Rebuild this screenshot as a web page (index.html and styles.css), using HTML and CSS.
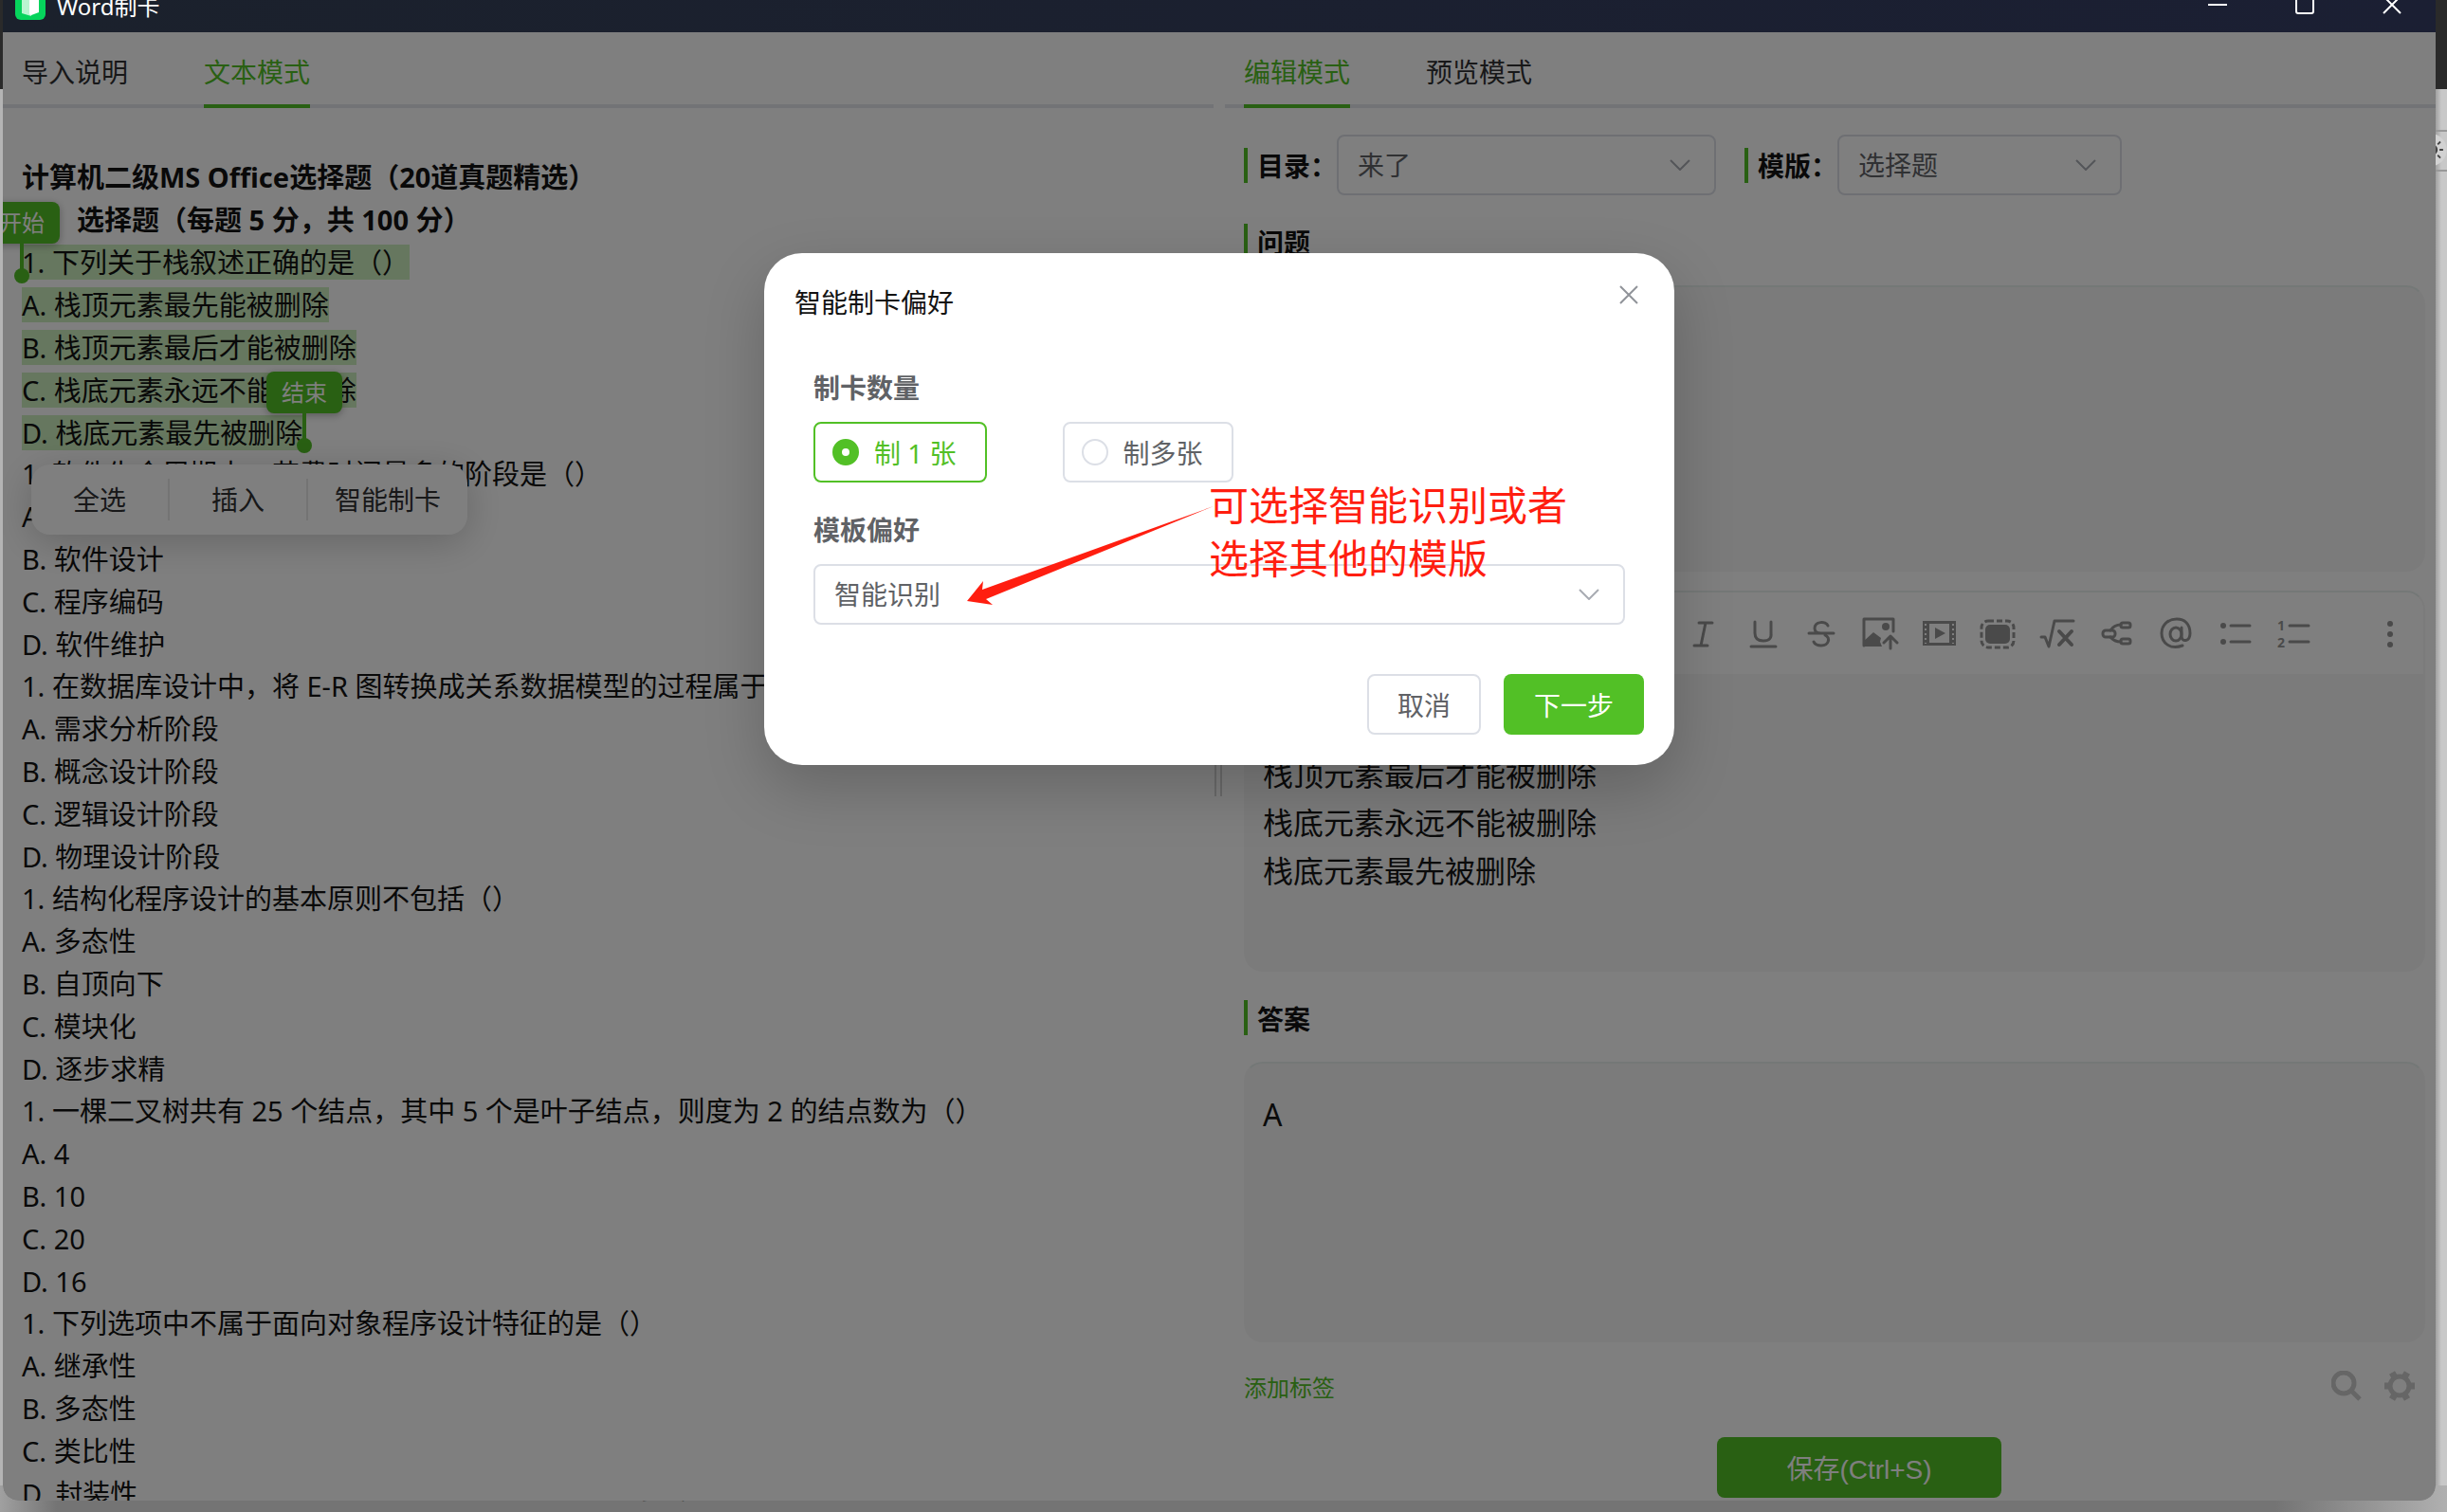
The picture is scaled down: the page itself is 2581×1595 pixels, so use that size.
FILE: index.html
```
<!DOCTYPE html>
<html lang="zh-CN">
<head>
    <meta charset="UTF-8">
    <meta name="viewport" content="width=device-width, initial-scale=1.0">
    <title>Word制卡</title>
    <link rel="stylesheet" href="styles.css">
</head>
<body>
    <div class="app">
        <!-- 标题栏 -->
        <header class="titlebar">
            <svg class="logo" viewBox="0 0 32 32">
                <rect width="32" height="32" rx="6" fill="#06d45c"/>
                <path d="M7 4h10v24l-10-3z" fill="#b9f5d0"/>
                <path d="M15 4h10v20l-8 3-2-1z" fill="#fff"/>
            </svg>
            <h1>Word制卡</h1>
            <div class="win-btns">
                <button aria-label="最小化"><svg viewBox="0 0 20 20"><path d="M0 10h20"/></svg></button>
                <button aria-label="最大化"><svg viewBox="0 0 20 20"><rect x="1" y="1" width="18" height="18" rx="2"/></svg></button>
                <button aria-label="关闭"><svg viewBox="0 0 20 20"><path d="M1 1l18 18M19 1L1 19"/></svg></button>
            </div>
        </header>

        <main class="main">
            <!-- 左侧文本 -->
            <section class="pane left">
                <nav class="tabs">
                    <a href="#">导入说明</a>
                    <a href="#" class="active">文本模式</a>
                </nav>
                <div class="doc">
                    <h2>计算机二级MS Office选择题（20道真题精选）</h2>
                    <h2 class="indent">选择题（每题 5 分，共 100 分）</h2>
                    <div class="question picked">
                        <p>1. 下列关于栈叙述正确的是（）</p>
                        <p>A. 栈顶元素最先能被删除</p>
                        <p>B. 栈顶元素最后才能被删除</p>
                        <p>C. 栈底元素永远不能被删除</p>
                        <p>D. 栈底元素最先被删除</p>
                        <div class="handle start"><span>开始</span></div>
                        <div class="handle end"><span>结束</span></div>
                        <div class="popmenu">
                            <button>全选</button>
                            <button>插入</button>
                            <button>智能制卡</button>
                        </div>
                    </div>
                    <div class="question">
                        <p>1. 软件生命周期中，花费时间最多的阶段是（）</p>
                        <p>A. 需求分析</p>
                        <p>B. 软件设计</p>
                        <p>C. 程序编码</p>
                        <p>D. 软件维护</p>
                    </div>
                    <div class="question">
                        <p>1. 在数据库设计中，将 E-R 图转换成关系数据模型的过程属于（）</p>
                        <p>A. 需求分析阶段</p>
                        <p>B. 概念设计阶段</p>
                        <p>C. 逻辑设计阶段</p>
                        <p>D. 物理设计阶段</p>
                    </div>
                    <div class="question">
                        <p>1. 结构化程序设计的基本原则不包括（）</p>
                        <p>A. 多态性</p>
                        <p>B. 自顶向下</p>
                        <p>C. 模块化</p>
                        <p>D. 逐步求精</p>
                    </div>
                    <div class="question">
                        <p>1. 一棵二叉树共有 25 个结点，其中 5 个是叶子结点，则度为 2 的结点数为（）</p>
                        <p>A. 4</p>
                        <p>B. 10</p>
                        <p>C. 20</p>
                        <p>D. 16</p>
                    </div>
                    <div class="question">
                        <p>1. 下列选项中不属于面向对象程序设计特征的是（）</p>
                        <p>A. 继承性</p>
                        <p>B. 多态性</p>
                        <p>C. 类比性</p>
                        <p>D. 封装性</p>
                    </div>
                </div>
            </section>

            <div class="splitter"></div>

            <!-- 右侧编辑 -->
            <section class="pane right">
                <nav class="tabs">
                    <a href="#" class="active">编辑模式</a>
                    <a href="#">预览模式</a>
                </nav>
                <div class="editor">
                    <div class="form-row">
                        <label class="label" for="catalog">目录：</label>
                        <div class="select catalog">
                            <select id="catalog"><option>来了</option></select>
                            <svg viewBox="0 0 22 12"><path d="M1 1l10 10L21 1"/></svg>
                        </div>
                        <label class="label" for="template">模版：</label>
                        <div class="select template">
                            <select id="template"><option>选择题</option></select>
                            <svg viewBox="0 0 22 12"><path d="M1 1l10 10L21 1"/></svg>
                        </div>
                    </div>

                    <h3 class="label">问题</h3>
                    <div class="card question-card"></div>

                    <div class="card options-card">
                        <div class="toolbar">
                            <button aria-label="斜体"><svg viewBox="0 0 40 40"><path d="M15 9h14M10 33h14M22 9l-5 24"/></svg></button>
                            <button aria-label="下划线"><svg viewBox="0 0 40 40"><path d="M12 8v12q0 8 9 8t8-8V8M8 34h26"/></svg></button>
                            <button aria-label="删除线"><svg viewBox="0 0 40 40"><path d="M27 12c-2-5-14-5-14 3 0 3 3 5 7 5M7 20h26M24 22c6 3 4 11-4 11-4 0-7-2-8-4"/></svg></button>
                            <button aria-label="图片"><svg viewBox="0 0 40 40"><path d="M3 33V5h31v13M31 36V23M24 30l7-7 7 7"/><path class="fill" d="M2 29l11-10 8 6-1 4 2 5H2z"/><circle class="fill" cx="26" cy="13" r="4"/></svg></button>
                            <button aria-label="视频"><svg viewBox="0 0 40 40"><path class="fill" fill-rule="evenodd" d="M3 7h35v26H3zM10 10v20h21V10z"/><path class="fill" d="M16 14l11 6-11 6z"/><path class="holes" d="M6 10v21M35 10v21"/></svg></button>
                            <button aria-label="遮挡"><svg viewBox="0 0 40 40"><rect class="dashed" x="3" y="7" width="34" height="28" rx="7"/><rect class="fill" x="7" y="11" width="26" height="20" rx="5"/></svg></button>
                            <button aria-label="公式"><svg viewBox="0 0 40 40"><path d="M4 24h4l4 10 6-27h20"/><path class="thick" d="M23 18l13 14M36 18L23 32"/></svg></button>
                            <button aria-label="导图"><svg viewBox="0 0 40 40"><rect x="7" y="17" width="13" height="7" rx="3"/><rect x="26" y="9" width="10" height="5" rx="2"/><rect x="26" y="26" width="10" height="5" rx="2"/><path d="M15 17q4-6 11-6M15 24q4 5 11 5"/></svg></button>
                            <button aria-label="提及"><svg viewBox="0 0 40 40"><ellipse cx="22" cy="21" rx="6" ry="7"/><path d="M28 14v9c0 7 9 6 9-3C37 10 31 5 23 5 14 5 7 11 7 20c0 10 9 18 22 13"/></svg></button>
                            <button aria-label="无序列表"><svg viewBox="0 0 40 40"><circle class="fill" cx="10" cy="12" r="3"/><circle class="fill" cx="10" cy="29" r="3"/><path d="M18 12h20M18 29h20"/></svg></button>
                            <button aria-label="有序列表"><svg viewBox="0 0 40 40"><text x="5" y="17">1</text><text x="5" y="35">2</text><path d="M18 12h20M18 29h20"/></svg></button>
                            <button class="more" aria-label="更多"><svg viewBox="0 0 40 40"><circle class="fill" cx="20" cy="10" r="3"/><circle class="fill" cx="20" cy="21" r="3"/><circle class="fill" cx="20" cy="32" r="3"/></svg></button>
                        </div>
                        <div class="options">
                            <p>栈顶元素最后才能被删除</p>
                            <p>栈底元素永远不能被删除</p>
                            <p>栈底元素最先被删除</p>
                        </div>
                    </div>

                    <h3 class="label">答案</h3>
                    <div class="card answer-card"><p>A</p></div>

                    <div class="tag-row">
                        <a href="#">添加标签</a>
                        <button aria-label="搜索"><svg viewBox="0 0 32 32"><circle cx="13" cy="13" r="11"/><path d="M21 21l9 9"/></svg></button>
                        <button aria-label="设置"><svg viewBox="0 0 32 32"><circle cx="16" cy="16" r="10"/><path class="teeth" d="M0 16h5M27 16h5M8 2l3 5M21 25l3 5M24 2l-3 5M11 25l-3 5"/></svg></button>
                    </div>
                    <div class="save-row">
                        <button class="save">保存(Ctrl+S)</button>
                    </div>
                </div>
            </section>

            <!-- 弹窗 -->
            <div class="overlay">
                <div class="modal" role="dialog" aria-labelledby="modalTitle">
                    <div class="modal-header">
                        <h2 id="modalTitle">智能制卡偏好</h2>
                        <button class="close" aria-label="关闭"><svg viewBox="0 0 20 20"><path d="M1 1l18 18M19 1L1 19"/></svg></button>
                    </div>
                    <div class="modal-body">
                        <h4>制卡数量</h4>
                        <div class="radios">
                            <label class="radio"><input type="radio" name="count" checked>制 1 张</label>
                            <label class="radio"><input type="radio" name="count">制多张</label>
                        </div>
                        <h4><label for="prefer">模板偏好</label></h4>
                        <div class="select">
                            <select id="prefer"><option>智能识别</option></select>
                            <svg viewBox="0 0 22 12"><path d="M1 1l10 10L21 1"/></svg>
                        </div>
                    </div>
                    <div class="modal-footer">
                        <button class="cancel">取消</button>
                        <button class="next">下一步</button>
                    </div>
                    <!-- 标注 -->
                    <svg class="arrow" viewBox="0 0 260 104"><path d="M0 100l17-21-1 9L260 0 20 98l7 6z"/></svg>
                    <p class="note">可选择智能识别或者<br>选择其他的模版</p>
                </div>
            </div>
        </main>
    </div>

    <!-- 后面的窗口 -->
    <div class="behind-right">
        <svg viewBox="0 0 12 42"><circle cx="-6" cy="20" r="18" fill="#d2d2d2"/><circle cx="-4" cy="20" r="6" fill="#444"/><path d="M4 20h4M2 14l3-3M2 26l3 3" stroke="#444" stroke-width="2"/></svg>
    </div>
    <div class="behind-bottom">D. 多态性</div>
</body>
</html>
```
FILE: styles.css
```
* {
    box-sizing: border-box;
}

body {
    margin: 0;
    height: 100vh;
    overflow: hidden;
    position: relative;
    padding: 0 12px 12px 3px;
    font-family: "Noto Sans", "Noto Sans CJK SC", sans-serif;
    font-size: 28px;
    color: #303133;
    background: linear-gradient(#2a2a2a 94px, #b4b4b4 94px);
}

h1, h2, h3, h4, p {
    margin: 0;
}

button, select {
    font: inherit;
    color: inherit;
    border: none;
    background: none;
    padding: 0;
}

a {
    color: inherit;
    text-decoration: none;
}

svg {
    fill: none;
    stroke: currentColor;
    stroke-width: 2;
    display: block;
}

/* 窗口顶部超出屏幕 */
.app {
    display: flex;
    flex-direction: column;
    height: calc(100% + 24px);
    margin-top: -24px;
    border-radius: 0 0 16px 16px;
    overflow: hidden;
    background: #fff;
    position: relative;
    z-index: 1;
}

.titlebar {
    display: flex;
    align-items: center;
    height: 58px;
    flex-shrink: 0;
    padding-left: 13px;
    background: linear-gradient(90deg, #1b212c, #1b1f33);
    color: #fff;
}

.titlebar h1 {
    margin-left: 12px;
    font-size: 24px;
    font-weight: normal;
}

.logo {
    width: 32px;
    height: 32px;
    stroke: none;
}

.win-btns {
    display: flex;
    margin-left: auto;
}

.win-btns button {
    width: 92px;
    padding: 0 36px;
}

.main {
    flex: 1;
    min-height: 0;
    display: flex;
    position: relative;
}

.pane {
    flex: 1;
    min-width: 0;
    display: flex;
    flex-direction: column;
    overflow: hidden;
}

.tabs {
    display: flex;
    gap: 80px;
    height: 80px;
    flex-shrink: 0;
    padding: 0 20px;
    border-bottom: 4px solid #e4e7ed;
}

.tabs a {
    height: 80px;
    padding-top: 6px;
    line-height: 72px;
}

.tabs a.active {
    color: #52c026;
    border-bottom: 4px solid #52c026;
}

/* 左侧文本 */
.doc {
    padding: 50px 20px 0;
    font-size: 29px;
    line-height: 45px;
    color: #121212;
    white-space: nowrap;
}

.doc h2 {
    font-size: 29px;
}

.indent {
    padding-left: 58px;
}

.question p:first-child {
    line-height: 44px;
}

.picked {
    display: flow-root;
    position: relative;
}

.picked p,
.picked p:first-child {
    width: fit-content;
    line-height: 37px;
    background: #cceebe;
}

.picked p {
    margin-top: 8px;
}

.picked p:first-child {
    margin-top: 4px;
}

.picked p:last-of-type {
    margin-bottom: 3px;
}

.handle {
    position: absolute;
    width: 80px;
    height: 82px;
}

.handle.start {
    left: -40px;
    top: -41px;
}

.handle.end {
    left: 258px;
    top: 138px;
}

.handle span {
    display: block;
    height: 44px;
    line-height: 44px;
    border-radius: 8px;
    font-size: 24px;
    text-align: center;
    color: #fff;
    background: #52c026;
    box-shadow: 0 2px 8px rgba(0, 0, 0, 0.3);
}

.handle::before {
    content: "";
    position: absolute;
    left: 38px;
    top: 44px;
    width: 4px;
    height: 30px;
    background: #52c026;
}

.handle::after {
    content: "";
    position: absolute;
    left: 32px;
    top: 70px;
    width: 16px;
    height: 16px;
    border-radius: 50%;
    background: #52c026;
}

.popmenu {
    position: absolute;
    left: 10px;
    top: 236px;
    display: flex;
    align-items: center;
    height: 74px;
    border-radius: 20px;
    font-size: 28px;
    background: #fff;
    box-shadow: 0 8px 40px rgba(0, 0, 0, 0.2);
}

.popmenu button {
    height: 44px;
    padding: 0 44px;
    line-height: 44px;
    border-right: 2px solid #e8e8e8;
    color: #303133;
}

.popmenu button:last-child {
    padding: 0 28px;
    border: none;
}

.splitter {
    width: 12px;
    height: 62px;
    align-self: center;
    background: linear-gradient(90deg, transparent 1px, #d4d4d4 1px, #d4d4d4 3px, transparent 3px, transparent 7px, #d4d4d4 7px, #d4d4d4 9px, transparent 9px);
}

/* 右侧编辑 */
.editor {
    padding: 28px 11px 0 20px;
}

.form-row {
    display: flex;
    align-items: center;
    margin-bottom: 30px;
}

.label {
    display: flex;
    align-items: center;
    height: 64px;
    font-size: 28px;
    font-weight: bold;
    color: #121212;
}

.label::before {
    content: "";
    width: 4px;
    height: 37px;
    margin-right: 10px;
    background: #52c026;
}

h3.label {
    height: 37px;
}

.select {
    position: relative;
}

.select select {
    width: 100%;
    height: 64px;
    padding: 0 20px;
    appearance: none;
    border: 2px solid #dcdfe6;
    border-radius: 8px;
    background: #fff;
    color: #606266;
}

.select svg {
    position: absolute;
    right: 27px;
    top: 26px;
    width: 22px;
    height: 12px;
    color: #a8abb2;
}

.catalog {
    width: 400px;
    margin-right: 30px;
}

.template {
    width: 300px;
}

.card {
    margin-top: 28px;
    border: 2px solid #f7f7f7;
    border-top-color: #e8f0ee;
    border-radius: 20px;
    background: #f7f7f7;
    font-size: 32px;
    line-height: 51px;
    color: #161616;
    overflow: hidden;
}

.question-card {
    height: 302px;
}

.options-card {
    height: 402px;
    margin: 20px 0 30px;
}

.answer-card {
    height: 296px;
    padding: 28px 18px;
}

.toolbar {
    display: flex;
    justify-content: flex-end;
    align-items: center;
    gap: 22px;
    height: 86px;
    padding-right: 15px;
    background: #fff;
    color: #949494;
}

.toolbar button {
    width: 40px;
    height: 40px;
}

.toolbar .more {
    margin-left: 42px;
}

.toolbar svg {
    stroke-width: 3;
    stroke-linecap: round;
    stroke-linejoin: round;
}

.toolbar .fill {
    fill: currentColor;
    stroke: none;
}

.toolbar .dashed {
    stroke-linecap: butt;
    stroke-dasharray: 6 3;
}

.toolbar .holes {
    stroke: #fff;
    stroke-width: 2;
    stroke-linecap: butt;
    stroke-dasharray: 2 3;
}

.toolbar .thick {
    stroke-width: 4;
}

.toolbar text {
    fill: currentColor;
    stroke: none;
    font-size: 14px;
    font-weight: bold;
}

.options {
    padding: 80px 18px 0;
}

.tag-row {
    display: flex;
    align-items: center;
    gap: 24px;
    height: 92px;
    padding-right: 11px;
    font-size: 24px;
    color: #52c026;
}

.tag-row a {
    margin-right: auto;
}

.tag-row button {
    width: 32px;
    height: 32px;
    color: #ccc;
}

.tag-row svg {
    stroke-width: 5;
}

.tag-row .teeth {
    stroke-width: 7;
}

.save-row {
    display: flex;
    justify-content: center;
    margin-top: 8px;
    padding-left: 52px;
}

.save {
    width: 300px;
    height: 64px;
    border-radius: 8px;
    font-family: "Liberation Sans", "Noto Sans CJK SC", sans-serif;
    color: #fff;
    background: #52c026;
}

/* 弹窗 */
.overlay {
    position: absolute;
    inset: 0;
    background: rgba(0, 0, 0, 0.5);
}

.modal {
    position: relative;
    width: 960px;
    margin: 233px auto 0;
    padding: 32px;
    border-radius: 40px;
    background: #fff;
    box-shadow: 0 24px 64px rgba(0, 0, 0, 0.2);
}

.modal-header {
    display: flex;
    justify-content: space-between;
    line-height: 40px;
    color: #121212;
}

.modal-header h2 {
    font-size: 28px;
    font-weight: normal;
}

.close {
    width: 20px;
    height: 20px;
    margin: 2px 6px 0 0;
    color: #909399;
}

.modal-body {
    padding: 48px 20px 52px;
    color: #606266;
}

.modal-body h4 {
    margin-bottom: 14px;
    font-size: 28px;
    line-height: 44px;
}

.radios {
    display: flex;
    gap: 80px;
    margin-bottom: 28px;
}

.radio {
    display: flex;
    align-items: center;
    gap: 16px;
    height: 64px;
    padding: 0 30px 0 18px;
    border: 2px solid #dcdfe6;
    border-radius: 8px;
}

.radio input {
    appearance: none;
    width: 28px;
    height: 28px;
    margin: 0;
    border: 2px solid #dcdfe6;
    border-radius: 50%;
}

.radio:has(input:checked) {
    color: #52c026;
    border-color: #52c026;
}

.radio input:checked {
    border: 10px solid #52c026;
}

.modal-footer {
    display: flex;
    justify-content: flex-end;
    gap: 24px;
}

.modal-footer button {
    height: 64px;
    padding: 0 32px;
    border-radius: 8px;
}

.modal-footer .cancel {
    padding: 0 30px;
    border: 2px solid #dcdfe6;
    color: #606266;
}

.modal-footer .next {
    color: #fff;
    background: #52c026;
}

/* 红色标注浮在弹窗上 */
.arrow {
    position: absolute;
    left: 214px;
    top: 267px;
    width: 260px;
    height: 104px;
    fill: #ff1e10;
    stroke: none;
}

.note {
    position: absolute;
    left: 469px;
    top: 238px;
    font-size: 42px;
    line-height: 56px;
    color: #ff1e10;
    white-space: nowrap;
}

/* 后面的窗口露出的边 */
.behind-right {
    position: absolute;
    top: 94px;
    right: 0;
    bottom: 0;
    width: 12px;
    padding-top: 43px;
    background: linear-gradient(90deg, #a0a0a0, #c8c8c8 6px);
}

.behind-right svg {
    width: 12px;
    height: 44px;
    border-top: 2px solid #999;
    border-bottom: 2px solid #999;
    stroke: none;
}

.behind-bottom {
    position: absolute;
    left: 0;
    right: 0;
    bottom: 0;
    height: 28px;
    padding-left: 652px;
    font-size: 20px;
    line-height: 16px;
    color: #444;
    background: linear-gradient(90deg, #a0a0a0, #747474 60px, #747474 2400px, #b0b0b0);
}
```
